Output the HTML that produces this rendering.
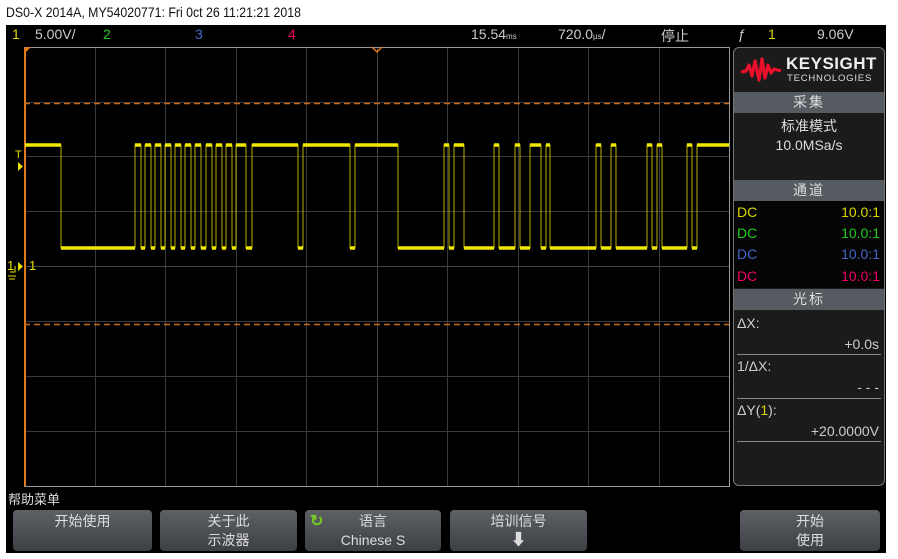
<!DOCTYPE html>
<html><head><meta charset="utf-8"><style>
*{margin:0;padding:0;box-sizing:border-box}
body{width:898px;height:559px;background:#fff;position:relative;overflow:hidden;font-family:"Liberation Sans","Noto Sans CJK SC",sans-serif}
.t{position:absolute;white-space:nowrap}
.scope{position:absolute;left:6px;top:25px;width:880px;height:528px;background:#000}
.panel{position:absolute;left:733px;top:47px;width:152px;height:439px;background:#1b1b1b;border:1px solid #777;border-radius:6px;overflow:hidden}
.hdr{position:absolute;left:0;width:150px;height:21px;background:#555b60;color:#ddd;font-size:14px;text-align:center;line-height:21px;letter-spacing:2px}
.btn{position:absolute;top:510px;height:41px;background:linear-gradient(#5d6166,#3c3f43);border-radius:4px;color:#ddd;font-size:14px;text-align:center;line-height:19px;padding-top:2px}
</style></head><body>
<div class="t" style="left:6px;top:4px;font-size:14px;color:#111;transform:scaleX(0.88);transform-origin:left">DS0-X 2014A, MY54020771: Fri 0ct 26 11:21:21 2018</div>
<div class="scope"></div>
<div class="t" style="left:12px;top:26px;font-size:14px;color:#d8d800">1</div>
<div class="t" style="left:35px;top:26px;font-size:14px;color:#ccc">5.00V/</div>
<div class="t" style="left:103px;top:26px;font-size:14px;color:#2c2">2</div>
<div class="t" style="left:195px;top:26px;font-size:14px;color:#46c">3</div>
<div class="t" style="left:288px;top:26px;font-size:14px;color:#e06">4</div>
<div class="t" style="left:471px;top:26px;font-size:14px;color:#ccc">15.54<span style="font-size:8px">ms</span></div>
<div class="t" style="left:558px;top:26px;font-size:14px;color:#ccc">720.0<span style="font-size:8px">μs</span>/</div>
<div class="t" style="left:661px;top:26px;font-size:14px;color:#ccc">停止</div>
<div class="t" style="left:738px;top:26px;font-size:14px;color:#ccc">ƒ</div>
<div class="t" style="left:768px;top:26px;font-size:14px;color:#d8d800">1</div>
<div class="t" style="left:817px;top:26px;font-size:14px;color:#ccc">9.06V</div>
<svg style="position:absolute;left:0;top:0" width="898" height="559">
<g stroke="#3a3a3a" stroke-width="1">
<path d="M95.5 48V486M165.5 48V486M236.5 48V486M306.5 48V486M447.5 48V486M518.5 48V486M588.5 48V486M659.5 48V486"/>
<path d="M24 102.5H729M24 156.5H729M24 211.5H729M24 321.5H729M24 376.5H729M24 431.5H729"/>
</g>
<g stroke="#444"><path d="M377.5 48V486M24 266.5H729"/></g>
<rect x="24.5" y="47.5" width="705" height="439" fill="none" stroke="#999"/>
<path d="M25 48V486" stroke="#e07a1a" stroke-width="2"/>
<path d="M24 103.5H729M24 324.5H729" stroke="#c8681a" stroke-width="1.5" stroke-dasharray="6,4"/>
<path d="M372 47L377 52L382 47" stroke="#e07a1a" fill="none" stroke-width="1.5"/>
<path d="M25 47h6l-6 6z" fill="#e07a1a"/>
<path d="M25 145 H61 V248 H135 V145 H141 V248 H145 V145 H151 V248 H155 V145 H161 V248 H165 V145 H171 V248 H175 V145 H181 V248 H185 V145 H191 V248 H195 V145 H201 V248 H206 V145 H212 V248 H216 V145 H222 V248 H226 V145 H232 V248 H236 V145 H246 V248 H252 V145 H298 V248 H303 V145 H350 V248 H355 V145 H398 V248 H444 V145 H449 V248 H454 V145 H464 V248 H494 V145 H499 V248 H515 V145 H520 V248 H530 V145 H541 V248 H546 V145 H550 V248 H596 V145 H601 V248 H611 V145 H616 V248 H647 V145 H652 V248 H657 V145 H662 V248 H687 V145 H692 V248 H697 V145 H729" fill="none" stroke="#b8b000" stroke-width="1"/>
<path d="M25 145H61M135 145H141M145 145H151M155 145H161M165 145H171M175 145H181M185 145H191M195 145H201M206 145H212M216 145H222M226 145H232M236 145H246M252 145H298M303 145H350M355 145H398M444 145H449M454 145H464M494 145H499M515 145H520M530 145H541M546 145H550M596 145H601M611 145H616M647 145H652M657 145H662M687 145H692M697 145H729M61 248H135M141 248H145M151 248H155M161 248H165M171 248H175M181 248H185M191 248H195M201 248H206M212 248H216M222 248H226M232 248H236M246 248H252M298 248H303M350 248H355M398 248H444M449 248H454M464 248H494M499 248H515M520 248H530M541 248H546M550 248H596M601 248H611M616 248H647M652 248H657M662 248H687M692 248H697" stroke="#f0e800" stroke-width="3.5"/>
<path d="M18 162l5 4.5-5 4.5z M18 262l5 4.5-5 4.5z" fill="#e8e000"/>
<path d="M10 272h5v-6M8 276h8M9 279h6" stroke="#e8e000" fill="none"/>
</svg>
<div class="t" style="left:15px;top:149px;font-size:11px;color:#e8e000">T</div>
<div class="t" style="left:7px;top:258px;font-size:13px;color:#e8e000">1</div>
<div class="t" style="left:29px;top:258px;font-size:13px;color:#e8e000">1</div>
<div class="panel">
<svg style="position:absolute;left:6px;top:8px" width="42" height="28" viewBox="0 0 42 28"><path d="M1 16 L6 15 L9 9 L12 20 L15 5 L19 24 L22 3 L25 22 L28 9 L31 17 L34 13 L41 15" fill="none" stroke="#e8102a" stroke-width="3.2" stroke-linejoin="round"/></svg>
<div class="t" style="left:52px;top:6px;font-size:17px;font-weight:bold;color:#eee;letter-spacing:0.5px">KEYSIGHT</div>
<div class="t" style="left:53px;top:25px;font-size:9.5px;color:#ddd;letter-spacing:0.8px">TECHNOLOGIES</div>
<div class="hdr" style="top:44px">采集</div>
<div class="t" style="left:0;width:150px;text-align:center;top:68px;font-size:14px;color:#ddd">标准模式</div>
<div class="t" style="left:0;width:150px;text-align:center;top:89px;font-size:14px;color:#ddd">10.0MSa/s</div>
<div class="hdr" style="top:132px">通道</div>
<div style="position:absolute;left:0;top:153px;width:150px;height:87px;background:#050505"></div>
<div class="t" style="left:3px;top:156px;font-size:14px;color:#d8d800">DC</div><div class="t" style="right:4px;top:156px;font-size:14px;color:#d8d800">10.0:1</div>
<div class="t" style="left:3px;top:177px;font-size:14px;color:#2c2">DC</div><div class="t" style="right:4px;top:177px;font-size:14px;color:#2c2">10.0:1</div>
<div class="t" style="left:3px;top:198px;font-size:14px;color:#46c">DC</div><div class="t" style="right:4px;top:198px;font-size:14px;color:#46c">10.0:1</div>
<div class="t" style="left:3px;top:220px;font-size:14px;color:#e06">DC</div><div class="t" style="right:4px;top:220px;font-size:14px;color:#e06">10.0:1</div>
<div class="hdr" style="top:241px">光标</div>
<div class="t" style="left:3px;top:267px;font-size:14px;color:#ccc">ΔX:</div>
<div class="t" style="right:5px;top:288px;font-size:14px;color:#ccc">+0.0s</div>
<div style="position:absolute;left:3px;top:306px;width:144px;height:1px;background:#888"></div>
<div class="t" style="left:3px;top:310px;font-size:14px;color:#ccc">1/ΔX:</div>
<div class="t" style="right:5px;top:331px;font-size:14px;color:#ccc">- - -</div>
<div style="position:absolute;left:3px;top:350px;width:144px;height:1px;background:#888"></div>
<div class="t" style="left:3px;top:354px;font-size:14px;color:#ccc">ΔY(<span style="color:#d8d800">1</span>):</div>
<div class="t" style="right:5px;top:375px;font-size:14px;color:#ccc">+20.0000V</div>
<div style="position:absolute;left:3px;top:393px;width:144px;height:1px;background:#888"></div>
</div>
<div class="t" style="left:8px;top:489px;font-size:13px;color:#ddd">帮助菜单</div>
<div class="btn" style="left:13px;width:139px">开始使用</div>
<div class="btn" style="left:160px;width:137px">关于此<br>示波器</div>
<div class="btn" style="left:305px;width:136px">语言<br>Chinese S</div>
<div class="t" style="left:310px;top:511px;font-size:16px;font-weight:bold;color:#7c2">↻</div>
<div class="btn" style="left:450px;width:137px">培训信号<br><span style="font-size:16px">⬇</span></div>
<div class="btn" style="left:740px;width:140px">开始<br>使用</div>
</body></html>
